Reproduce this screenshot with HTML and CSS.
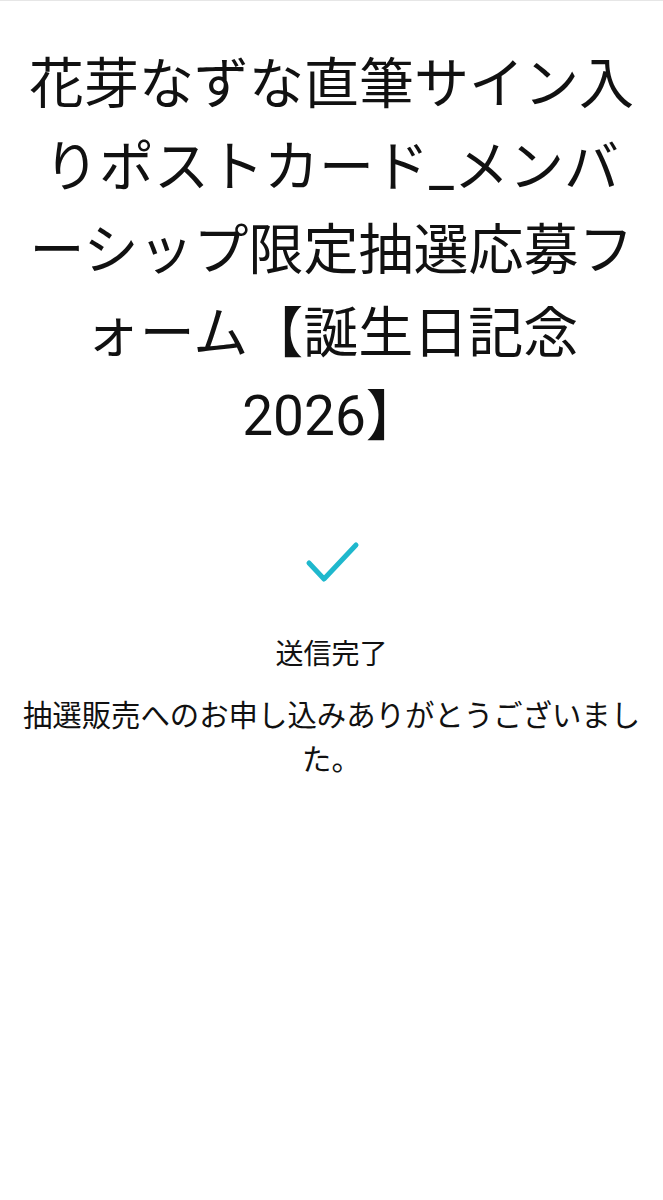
FILE: index.html
```html
<!DOCTYPE html>
<html lang="ja">
<head>
<meta charset="utf-8">
<title>送信完了</title>
<link rel="stylesheet" href="styles.css">
</head>
<body>
<main class="page">
  <h1 class="title">花芽なずな直筆サイン入りポストカード_メンバーシップ限定抽選応募フォーム【誕生日記念2026】</h1>
  <div class="done">
    <svg class="check" width="56" height="56" viewBox="0 0 56 56" aria-hidden="true">
      <path d="M5 28 L20 44 L52 10" fill="none" stroke="#1fb8cd" stroke-width="5" stroke-linecap="round" stroke-linejoin="round"/>
    </svg>
    <p class="status">送信完了</p>
    <p class="message">抽選販売へのお申し込みありがとうございました。</p>
  </div>
</main>
</body>
</html>
```

FILE: styles.css
```css
html, body {
  margin: 0;
  padding: 0;
  background: #ffffff;
}
body {
  font-family: Roboto, "Noto Sans CJK JP", "Noto Sans", sans-serif;
  color: #111111;
  border-top: 1px solid #e6e6e6;
}
.page {
  padding: 0 20px;
  display: flex;
  flex-direction: column;
  align-items: center;
}
.title {
  margin: 42px 0 0;
  font-size: 55px;
  font-weight: 400;
  line-height: 83px;
  text-align: center;
  width: 100%;
}
.done {
  display: flex;
  flex-direction: column;
  align-items: center;
  margin-top: 77px;
  width: 100%;
}
.check {
  display: block;
}
.status {
  margin: 42px 0 0;
  font-size: 28px;
  line-height: 44px;
  text-align: center;
}
.message {
  margin: 17px 0 0;
  font-size: 29.4px;
  line-height: 44px;
  text-align: center;
  width: 100%;
}
```
